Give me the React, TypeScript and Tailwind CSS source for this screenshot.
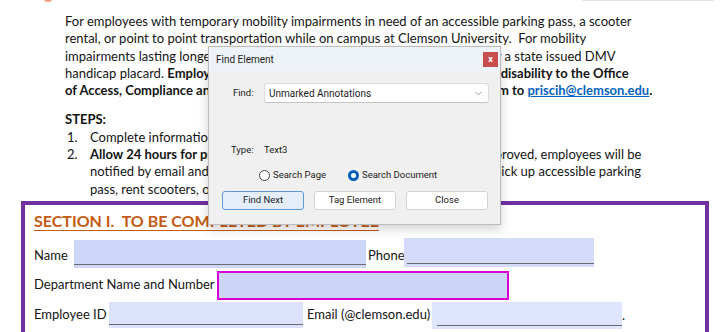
import { ChevronDown } from "lucide-react";

function Field({
  w,
  h,
  bg,
  line,
  extra = 0,
  lineInset = 0,
  magenta = false,
}: {
  w: number;
  h: number;
  bg: string;
  line?: boolean;
  extra?: number;
  lineInset?: number;
  magenta?: boolean;
}) {
  return (
    <div
      className={`relative flex shrink-0 items-end ${magenta ? "border-2 border-[#dc00d8]" : ""}`}
      style={{ width: w, height: h, background: bg }}
    >
      {line && (
        <div
          className="mb-[3px] h-px bg-[#6b6b6b]"
          style={{ marginLeft: lineInset, width: w - lineInset + extra }}
        />
      )}
    </div>
  );
}

function Dialog() {
  return (
    <div className="absolute left-[208px] top-[46px] h-[179px] w-[293px] border border-[#bcbcbc] bg-[#f0f0f0] font-['Roboto',sans-serif] text-[9.5px] text-[#1b1b1b] shadow-[0_4px_10px_rgba(0,0,0,0.18)]">
      <div className="flex h-[24px] items-center justify-between bg-[#eef3fa] pl-[7px] pr-[2px]">
        <span className="text-[10px]">Find Element</span>
        <div className="flex h-[15px] w-[15px] items-center justify-center bg-[#c84d4d] text-[9px] font-bold leading-none text-white">
          x
        </div>
      </div>
      <div className="flex items-center pl-[24px] pt-[12px]">
        <span className="w-[31px]">Find:</span>
        <div className="flex h-[20px] w-[225px] items-center justify-between rounded-[3px] border border-[#dcdcdc] border-b-[#c4c4c4] bg-white pl-[4px] pr-[4px]">
          <span className="text-[10px]">Unmarked Annotations</span>
          <ChevronDown className="h-[11px] w-[11px] text-[#777]" strokeWidth={1.5} />
        </div>
      </div>
      <div className="flex items-center pl-[22px] pt-[40px]">
        <span className="w-[33px]">Type:</span>
        <span>Text3</span>
      </div>
      <div className="flex items-center pl-[50px] pt-[11px]">
        <div className="flex w-[89px] items-center">
          <div className="h-[11px] w-[11px] rounded-full border border-[#444] bg-white" />
          <span className="ml-[3px]">Search Page</span>
        </div>
        <div className="flex h-[11px] w-[11px] items-center justify-center rounded-full bg-[#005fb8]">
          <div className="h-[5px] w-[5px] rounded-full bg-white" />
        </div>
        <span className="ml-[3px]">Search Document</span>
      </div>
      <div className="flex gap-[10px] pl-[13px] pt-[8px]">
        <div className="flex h-[19px] w-[82px] items-center justify-center rounded-[3px] border border-[#5b9ad6] bg-[#e3eefa]">
          Find Next
        </div>
        <div className="flex h-[19px] w-[82px] items-center justify-center rounded-[3px] border border-[#d3d3d3] bg-white">
          Tag Element
        </div>
        <div className="flex h-[19px] w-[82px] items-center justify-center rounded-[3px] border border-[#d3d3d3] bg-white">
          Close
        </div>
      </div>
    </div>
  );
}

export default function App() {
  return (
    <div className="relative h-[332px] w-[720px] overflow-hidden bg-white font-['Lato',sans-serif] text-[13px] text-[#141414]">
      <div className="absolute left-[44px] top-[-4px] h-[6px] w-[8px] rounded-full bg-[#f0a080]" />
      <div className="absolute left-[582px] top-0 h-px w-[132px] bg-[#e2e2e2]" />

      <div className="pl-[65px] pt-[13px] leading-[17.3px]">
        <p className="whitespace-pre">
          For employees with temporary mobility impairments in need of an accessible parking pass, a scooter
          <br />
          rental, or point to point transportation while on campus at Clemson University.  For mobility
          <br />
          impairments lasting longer than six months, employees may apply directly for a state issued DMV
          <br />
          handicap placard. <b>Employees must submit documentation of any associated disability to the Office</b>
          <br />
          <b>of Access, Compliance and Equity (OACE) by submitting their completed form to </b>
          <a className="font-bold text-[#0563c1] underline">priscih@clemson.edu</a>
          <b>.</b>
        </p>

        <p className="mt-[12px] font-bold">STEPS:</p>
        <div className="flex">
          <span className="w-[25px] pl-[2px]">1.</span>
          <span>Complete information in Section I of this form.</span>
        </div>
        <div className="flex">
          <span className="w-[25px] pl-[2px]">2.</span>
          <span className="whitespace-pre">
            <b>Allow 24 hours for processing.</b> After your requests are reviewed and approved, employees will be
            <br />
            notified by email and will be given detailed instructions on the steps to pick up accessible parking
            <br />
            pass, rent scooters, or schedule transportation.
          </span>
        </div>
      </div>

      <div className="ml-[21px] mt-[3px] h-[200px] w-[688px] border-[4px] border-b-0 border-[#7030a0] pl-[9px] pt-[6px]">
        <div className="whitespace-pre text-[16px] font-bold leading-[20px] text-[#c55a11] underline decoration-1 underline-offset-[3px]">
          SECTION I.  TO BE COMPLETED BY EMPLOYEE
        </div>
        <div className="mt-[9px] flex h-[30px] items-end whitespace-nowrap">
          <span className="mb-[4px] w-[40px] shrink-0">Name</span>
          <div className="mb-[2px]">
            <Field w={292} h={28} bg="#ced6fa" line lineInset={0} />
          </div>
          <span className="mb-[4px] ml-[2px] w-[36px] shrink-0">Phone</span>
          <div className="mb-[3px]">
            <Field w={190} h={29} bg="#d4dbfb" line lineInset={3} extra={6} />
          </div>
        </div>
        <div className="flex h-[30px] items-end whitespace-nowrap">
          <span className="mb-[5px] w-[183px] shrink-0">Department Name and Number</span>
          <Field w={292} h={29} bg="#ccd5f8" magenta />
        </div>
        <div className="flex h-[30px] items-end whitespace-nowrap">
          <span className="mb-[5px] w-[75px] shrink-0">Employee ID</span>
          <div className="mb-[2px]">
            <Field w={194} h={26} bg="#dce2fc" line />
          </div>
          <span className="mb-[5px] ml-[4px] w-[125px] shrink-0">Email (@clemson.edu)</span>
          <div className="mb-[1px]">
            <Field w={190} h={27} bg="#dee4fd" line lineInset={5} />
          </div>
          <span className="mb-[4px]">.</span>
        </div>
        <div className="font-bold leading-[17px]">Check all that apply:</div>
      </div>

      <Dialog />
    </div>
  );
}
